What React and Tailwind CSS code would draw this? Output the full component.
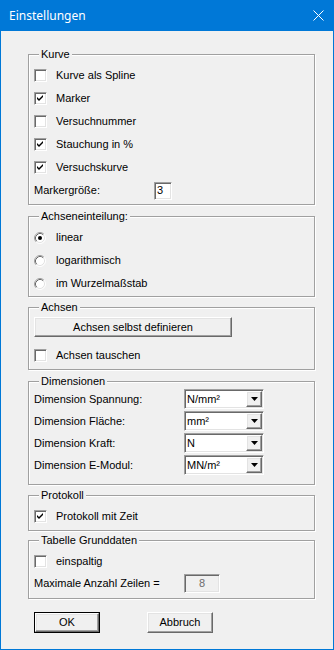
import React from 'react';

const sunken =
  'border border-t-[#a0a0a0] border-l-[#a0a0a0] border-r-white border-b-white shadow-[inset_1px_1px_0_#696969,inset_-1px_-1px_0_#e3e3e3]';
const raised =
  'border border-t-white border-l-white border-r-[#696969] border-b-[#696969] shadow-[inset_-1px_-1px_0_#a0a0a0,inset_1px_1px_0_#e3e3e3] bg-[#f0f0f0]';

const GroupBox = ({ title, className = '', children }) => (
  <div
    className={`relative border border-[#a0a0a0] shadow-[inset_1px_1px_0_#fff,1px_1px_0_#fff] pl-[5px] ${className}`}
  >
    <span className="absolute -top-[7px] left-[10px] bg-[#f0f0f0] px-[2px] leading-[13px]">{title}</span>
    {children}
  </div>
);

const CheckBox = ({ checked, label, className = 'h-[23px]' }) => (
  <div className={`flex items-center ${className}`}>
    <div className={`w-[13px] h-[13px] bg-white ${sunken} flex-shrink-0`}>
      {checked && (
        <svg width="11" height="11" viewBox="0 0 11 11" className="block">
          <polygon points="2,4 4,6 8,2 8,4 4,8 2,6" fill="#000" />
        </svg>
      )}
    </div>
    <span className="ml-[9px]">{label}</span>
  </div>
);

const Radio = ({ checked, label }) => (
  <div className="flex items-center h-[23px]">
    <svg width="12" height="12" viewBox="0 0 12 12" className="block flex-shrink-0">
      <circle cx="6" cy="6" r="5" fill="#fff" />
      <path d="M2.11 9.89 A5.5 5.5 0 0 1 9.89 2.11" fill="none" stroke="#a0a0a0" strokeWidth="1" />
      <path d="M9.89 2.11 A5.5 5.5 0 0 1 2.11 9.89" fill="none" stroke="#fff" strokeWidth="1" />
      <path d="M2.82 9.18 A4.5 4.5 0 0 1 9.18 2.82" fill="none" stroke="#696969" strokeWidth="1" />
      <path d="M9.18 2.82 A4.5 4.5 0 0 1 2.82 9.18" fill="none" stroke="#e3e3e3" strokeWidth="1" />
      {checked && <circle cx="6" cy="6" r="2" fill="#000" />}
    </svg>
    <span className="ml-[10px]">{label}</span>
  </div>
);

const Select = ({ value }) => (
  <div className={`w-[80px] h-[20px] bg-white ${sunken} flex items-center justify-between pl-[2px] pr-[1px]`}>
    <span>{value}</span>
    <div className={`w-[16px] h-[16px] ${raised} flex items-center justify-center`}>
      <svg width="7" height="4" viewBox="0 0 7 4" className="block">
        <polygon points="0,0 7,0 3.5,4" fill="#000" />
      </svg>
    </div>
  </div>
);

const DimRow = ({ label, value }) => (
  <div className="flex items-center h-[22px]">
    <span className="w-[150px]">{label}</span>
    <Select value={value} />
  </div>
);

export default function App() {
  return (
    <div className="w-[334px] h-[650px] bg-[#f0f0f0] font-['Liberation_Sans',Arial,sans-serif] text-[11px] text-black flex flex-col">
      {/* Titelleiste */}
      <div className="h-[31px] bg-[#0078d7] flex items-center justify-between pl-[9px] pr-[10px] flex-shrink-0">
        <span className="text-white text-[12px] font-['Noto_Sans',sans-serif]">Einstellungen</span>
        <svg width="11" height="11" viewBox="0 0 11 11" className="block">
          <path d="M0.5 0.5 L10.5 10.5 M10.5 0.5 L0.5 10.5" stroke="#fff" strokeWidth="1" />
        </svg>
      </div>

      <div className="flex-1 border-x border-b border-[#0078d7] pt-[23px]">
        <div className="ml-[27px] w-[287px] flex flex-col">
          <GroupBox title="Kurve" className="pt-[9px] pb-[2px]">
            <CheckBox label="Kurve als Spline" />
            <CheckBox checked label="Marker" />
            <CheckBox label="Versuchnummer" />
            <CheckBox checked label="Stauchung in %" />
            <CheckBox checked label="Versuchskurve" />
            <div className="flex items-center h-[23px]">
              <span className="w-[120px]">Markergröße:</span>
              <div className={`w-[18px] h-[18px] bg-white ${sunken} flex items-center pl-[2px]`}>3</div>
            </div>
          </GroupBox>

          <GroupBox title="Achseneinteilung:" className="mt-[11px] pt-[9px] pb-[1px]">
            <Radio checked label="linear" />
            <Radio label="logarithmisch" />
            <Radio label="im Wurzelmaßstab" />
          </GroupBox>

          <GroupBox title="Achsen" className="mt-[10px] pt-[9px] pb-[2px]">
            <div className={`w-[198px] h-[20px] ${raised} flex items-center justify-center`}>
              Achsen selbst definieren
            </div>
            <CheckBox label="Achsen tauschen" className="h-[23px] mt-[7px]" />
          </GroupBox>

          <GroupBox title="Dimensionen" className="mt-[11px] pt-[6px] pb-[8px]">
            <DimRow label="Dimension Spannung:" value="N/mm²" />
            <DimRow label="Dimension Fläche:" value="mm²" />
            <DimRow label="Dimension Kraft:" value="N" />
            <DimRow label="Dimension E-Modul:" value="MN/m²" />
          </GroupBox>

          <GroupBox title="Protokoll" className="mt-[10px] pt-[9px] pb-[2px]">
            <CheckBox checked label="Protokoll mit Zeit" />
          </GroupBox>

          <GroupBox title="Tabelle Grunddaten" className="mt-[9px] pt-[9px] pb-[4px]">
            <CheckBox label="einspaltig" className="h-[22px]" />
            <div className="flex items-center h-[22px]">
              <span className="w-[150px]">Maximale Anzahl Zeilen =</span>
              <div className={`w-[36px] h-[19px] ${sunken} flex items-center justify-center text-[#6d6d6d]`}>8</div>
            </div>
          </GroupBox>

          <div className="flex mt-[13px] pl-[6px]">
            <div className="w-[66px] h-[21px] border border-black">
              <div className={`w-full h-full ${raised} flex items-center justify-center`}>OK</div>
            </div>
            <div className={`ml-[47px] w-[66px] h-[21px] ${raised} flex items-center justify-center`}>Abbruch</div>
          </div>
        </div>
      </div>
    </div>
  );
}
